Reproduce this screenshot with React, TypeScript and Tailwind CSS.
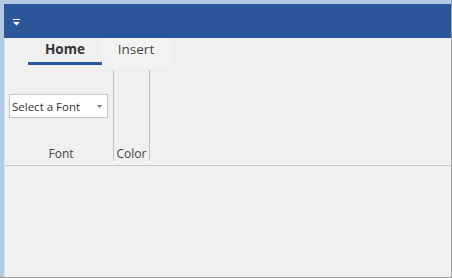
export default function App() {
  return (
    <div className="w-[452px] h-[278px] bg-[#b3c9e4] pt-1 pl-1 border-r border-b border-[#a0a0a0] flex flex-col font-['Open_Sans',sans-serif] overflow-hidden">
      <div className="flex-1 flex flex-col border-l border-[#d2e4fa] bg-[#f0f0f0]">
        {/* title bar */}
        <div className="h-[34px] bg-[#2b579a] flex items-center pl-[9px] -ml-px">
          <svg width="7" height="7" viewBox="0 0 7 7" className="mt-[2px]">
            <rect x="0" y="0" width="7" height="1" fill="#fff" />
            <path d="M0 3h7L3.5 6.5z" fill="#fff" />
          </svg>
        </div>

        {/* tabs */}
        <div className="h-[30px] flex items-stretch pl-[23px]">
          <div className="w-[74px] flex flex-col items-center justify-end">
            <span className="text-[13.5px] font-bold text-[#333] leading-none mb-[6px]">Home</span>
            <div className="h-[3px] w-full bg-[#2b579a] mb-[3px]" />
          </div>
          <div className="w-[68px] flex flex-col items-center justify-end bg-[#f3f3f3]">
            <span className="text-[13.5px] text-[#444] leading-none mb-[12px]">Insert</span>
          </div>
        </div>

        {/* ribbon groups */}
        <div className="h-[98px] flex border-b border-[#c8c8c8]">
          <div className="w-[108px] flex flex-col pl-1 pt-[26px] pb-[2px]">
            <div className="h-[24px] w-[99px] bg-white border border-[#c6c6c6] flex items-center justify-between pl-[2px] pr-[5px] pt-[2px]">
              <span className="text-[11.5px] text-[#333]">Select a Font</span>
              <svg width="5" height="3" viewBox="0 0 5 3" className="-mt-[2px]">
                <path d="M0 0h5L2.5 3z" fill="#777" />
              </svg>
            </div>
            <div className="flex-1" />
            <span className="text-center text-[12px] text-[#444] leading-none mb-[3px]">Font</span>
          </div>
          <div className="w-px bg-[#c0c0c0] mt-[2px] mb-[4px]" />
          <div className="w-[35px] flex flex-col justify-end items-center pb-[2px]">
            <span className="text-[12px] text-[#444] leading-none mb-[3px]">Color</span>
          </div>
          <div className="w-px bg-[#c0c0c0] mt-[2px] mb-[4px]" />
        </div>

        <div className="flex-1" />
      </div>
    </div>
  );
}
